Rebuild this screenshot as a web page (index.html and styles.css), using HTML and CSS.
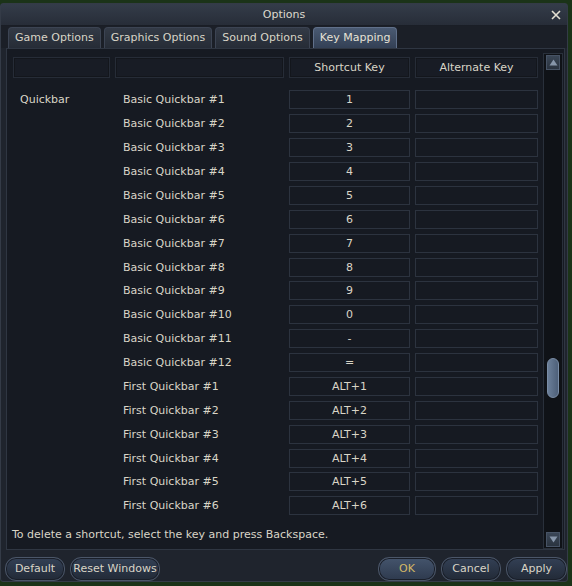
FILE: index.html
```html
<html>
<head>
<title>Options</title>
<link rel="stylesheet" href="styles.css">
</head>
<body>
<div class="window">
  <div class="titlebar">
    <span class="title">Options</span>
    <svg class="close" width="10" height="10" viewBox="0 0 10 10"><path d="M1 1 L9 9 M9 1 L1 9" stroke="#e4e0d2" stroke-width="1.6"/></svg>
  </div>
  <div class="tabs">
    <div class="tab">Game Options</div>
    <div class="tab">Graphics Options</div>
    <div class="tab">Sound Options</div>
    <div class="tab active">Key Mapping</div>
  </div>
  <div class="panel">
    <div class="main">
      <div class="header">
        <div class="hcell"></div>
        <div class="hcell"></div>
        <div class="hcell">Shortcut Key</div>
        <div class="hcell">Alternate Key</div>
      </div>
      <div class="rows">
        <div class="row"><span class="group">Quickbar</span><span class="name">Basic Quickbar #1</span><span class="key">1</span><span class="key"></span></div>
        <div class="row"><span class="group"></span><span class="name">Basic Quickbar #2</span><span class="key">2</span><span class="key"></span></div>
        <div class="row"><span class="group"></span><span class="name">Basic Quickbar #3</span><span class="key">3</span><span class="key"></span></div>
        <div class="row"><span class="group"></span><span class="name">Basic Quickbar #4</span><span class="key">4</span><span class="key"></span></div>
        <div class="row"><span class="group"></span><span class="name">Basic Quickbar #5</span><span class="key">5</span><span class="key"></span></div>
        <div class="row"><span class="group"></span><span class="name">Basic Quickbar #6</span><span class="key">6</span><span class="key"></span></div>
        <div class="row"><span class="group"></span><span class="name">Basic Quickbar #7</span><span class="key">7</span><span class="key"></span></div>
        <div class="row"><span class="group"></span><span class="name">Basic Quickbar #8</span><span class="key">8</span><span class="key"></span></div>
        <div class="row"><span class="group"></span><span class="name">Basic Quickbar #9</span><span class="key">9</span><span class="key"></span></div>
        <div class="row"><span class="group"></span><span class="name">Basic Quickbar #10</span><span class="key">0</span><span class="key"></span></div>
        <div class="row"><span class="group"></span><span class="name">Basic Quickbar #11</span><span class="key">-</span><span class="key"></span></div>
        <div class="row"><span class="group"></span><span class="name">Basic Quickbar #12</span><span class="key">=</span><span class="key"></span></div>
        <div class="row"><span class="group"></span><span class="name">First Quickbar #1</span><span class="key">ALT+1</span><span class="key"></span></div>
        <div class="row"><span class="group"></span><span class="name">First Quickbar #2</span><span class="key">ALT+2</span><span class="key"></span></div>
        <div class="row"><span class="group"></span><span class="name">First Quickbar #3</span><span class="key">ALT+3</span><span class="key"></span></div>
        <div class="row"><span class="group"></span><span class="name">First Quickbar #4</span><span class="key">ALT+4</span><span class="key"></span></div>
        <div class="row"><span class="group"></span><span class="name">First Quickbar #5</span><span class="key">ALT+5</span><span class="key"></span></div>
        <div class="row"><span class="group"></span><span class="name">First Quickbar #6</span><span class="key">ALT+6</span><span class="key"></span></div>
      </div>
      <div class="hint">To delete a shortcut, select the key and press Backspace.</div>
    </div>
    <div class="scrollbar">
      <div class="arrow"><svg width="9" height="7" viewBox="0 0 9 7"><path d="M4.5 0.5 L8.5 6.5 L0.5 6.5 Z" fill="#8796aa"/></svg></div>
      <div class="track"><div class="thumb"></div></div>
      <div class="arrow"><svg width="9" height="7" viewBox="0 0 9 7"><path d="M0.5 0.5 L8.5 0.5 L4.5 6.5 Z" fill="#8796aa"/></svg></div>
    </div>
  </div>
  <div class="buttons">
    <div class="btn w-default">Default</div>
    <div class="btn w-reset">Reset Windows</div>
    <div class="spacer"></div>
    <div class="btn ok w-ok">OK</div>
    <div class="btn w-cancel">Cancel</div>
    <div class="btn w-apply">Apply</div>
  </div>
</div>
</body>
</html>
```
FILE: styles.css
```css
*
{
    margin: 0;
    padding: 0;
    box-sizing: border-box;
}
html, body
{
    width: 100%;
    height: 100%;
    overflow: hidden;
}
body
{
    background: #1b3318;
    font-family: "DejaVu Sans", sans-serif;
    font-size: 11px;
    color: #d9d5c7;
}
.window
{
    width: 568px;
    height: 579px;
    margin-top: 3px;
    background: #1f242d;
    border: 1px solid #343b47;
    border-radius: 3px;
    display: flex;
    flex-direction: column;
}
.titlebar
{
    height: 22px;
    display: flex;
    align-items: center;
    justify-content: center;
    position: relative;
    background: linear-gradient(#343c49, #272d38);
    border-bottom: 1px solid #1a1e26;
}
.title
{
    font-size: 11px;
    color: #dedace;
}
.close
{
    position: absolute;
    right: 6px;
    top: 6px;
}
.tabs
{
    display: flex;
    gap: 3px;
    padding: 1px 0 0 7px;
    height: 22px;
    background: #1b1f27;
}
.tab
{
    height: 21px;
    padding: 0 6px;
    line-height: 20px;
    font-size: 11px;
    border: 1px solid #3c4453;
    border-bottom: none;
    border-radius: 4px 4px 0 0;
    background: linear-gradient(#333a46, #262c36);
}
.tab.active
{
    background: linear-gradient(#4a5a72, #334055);
    border-color: #60708a;
    color: #e6e2d6;
}
.panel
{
    margin: 0 2px 0 5px;
    height: 503px;
    border: 1px solid #2f3642;
    background: #161a22;
    display: flex;
}
.main
{
    flex: 1;
    display: flex;
    flex-direction: column;
    padding: 8px 0 0 6px;
}
.header,
.row
{
    display: grid;
    grid-template-columns: 97px 169px 121px 123px;
    column-gap: 5px;
}
.header
{
    height: 21px;
}
.hcell
{
    border: 1px solid #262c37;
    box-shadow: inset 0 0 0 1px #13161c;
    background: #181c25;
    text-align: center;
    line-height: 19px;
    font-size: 11px;
}
.rows
{
    margin-top: 10px;
}
.row
{
    height: 23.88px;
    align-items: center;
}
.group,
.name
{
    padding-left: 7px;
}
.name
{
    padding-left: 8px;
}
.key
{
    height: 19px;
    border: 1px solid #2c333f;
    background: #161a22;
    text-align: center;
    line-height: 17px;
}
.hint
{
    margin-top: auto;
    height: 30px;
    line-height: 31px;
    margin-left: -1px;
}
.scrollbar
{
    width: 20px;
    margin: 4px 1px 0 0;
    border: 1px solid #29303b;
    background: #0f1217;
    display: flex;
    flex-direction: column;
}
.arrow
{
    height: 15px;
    margin: 1px 2px;
    background: linear-gradient(#3a4656, #2a333f);
    border: 1px solid #475365;
    display: flex;
    align-items: center;
    justify-content: center;
}
.track
{
    flex: 1;
    position: relative;
}
.thumb
{
    position: absolute;
    left: 3px;
    right: 3px;
    top: 287px;
    height: 40px;
    border-radius: 6px;
    background: linear-gradient(90deg, #6a7e98, #4e6079);
    border: 1px solid #7a8da6;
}
.buttons
{
    display: flex;
    gap: 5px;
    padding: 7px 0 0 4px;
}
.spacer
{
    flex: 1;
}
.btn
{
    height: 24px;
    border-radius: 11px;
    border: 1px solid #4b5668;
    background: linear-gradient(#334055, #222a37);
    box-shadow: inset 0 0 0 1px #1a1f29;
    text-align: center;
    line-height: 22px;
    font-size: 11px;
}
.btn.ok
{
    background: linear-gradient(#44546c, #2e3a4e);
    color: #d2b866;
}
.w-default { width: 60px; }
.w-reset { width: 90px; }
.w-ok { width: 58px; }
.w-cancel { width: 60px; }
.w-apply { width: 61px; }
```
